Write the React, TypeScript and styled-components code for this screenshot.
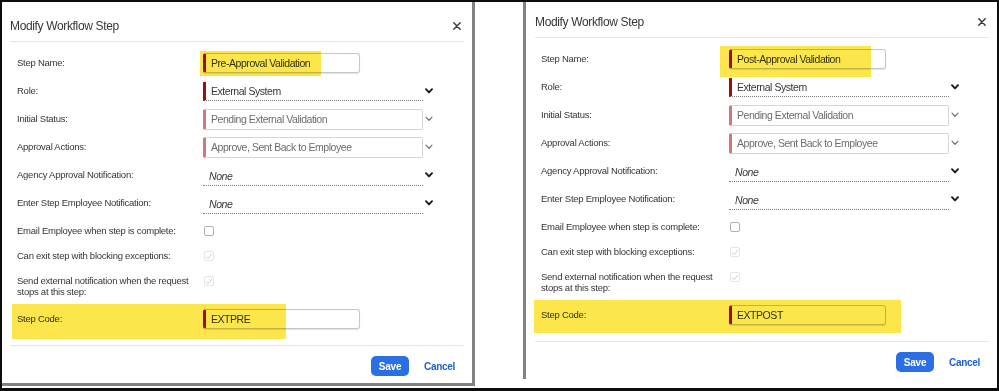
import React from "react";
import styled, { createGlobalStyle, css } from "styled-components";

const FONT = `"Liberation Sans", Arial, sans-serif`;

const GlobalStyle = createGlobalStyle`
  html, body { margin: 0; padding: 0; background: #fff; }
  body { font-family: ${FONT}; }
  * { box-sizing: border-box; }
`;

const Frame = styled.div`
  width: 999px;
  height: 391px;
  border: 2px solid #0d0d0d;
  border-bottom-width: 3px;
  display: flex;
  align-items: flex-start;
  background: #fff;
  overflow: hidden;
`;

const Gap = styled.div`
  width: 48px;
  flex: none;
`;

const Dialog = styled.div<{ $side: "left" | "right" }>`
  background: #fff;
  display: flex;
  flex-direction: column;
  flex: none;
  ${(p) =>
    p.$side === "left"
      ? css`
          width: 473px;
          height: 384px;
          border-right: 3px solid #7e8185;
          border-bottom: 3px solid #7e8185;
        `
      : css`
          flex: 1;
          height: 377px;
          border-left: 3px solid #7e8185;
        `}
`;

const Header = styled.div<{ $top: number; $ml: number }>`
  margin: 0 8px 0 ${(p) => p.$ml}px;
  padding: ${(p) => p.$top}px 3px 7px 0;
  border-bottom: 1px solid #e4e6e8;
  display: flex;
  justify-content: space-between;
  align-items: center;
`;

const Title = styled.div`
  font-size: 12px;
  letter-spacing: -0.35px;
  line-height: 16px;
  color: #32363a;
`;

const CloseBtn = styled.div`
  width: 8px;
  height: 8px;
  display: flex;
  cursor: pointer;
`;

const Body = styled.div`
  padding: 7px 0 0 15px;
  display: flex;
  flex-direction: column;
`;

const Row = styled.div<{ $h: number; $lw: number; $top?: boolean }>`
  position: relative;
  display: grid;
  grid-template-columns: ${(p) => p.$lw}px auto;
  height: ${(p) => p.$h}px;
  align-items: ${(p) => (p.$top ? "start" : "center")};
  ${(p) => p.$top && css`padding-top: 9px;`}
`;

const Label = styled.div`
  font-size: 9.5px;
  letter-spacing: -0.25px;
  line-height: 10.5px;
  color: #32363a;
  white-space: nowrap;
`;

const FieldCell = styled.div`
  display: flex;
  align-items: center;
`;

const TextBox = styled.div`
  width: 157px;
  height: 20px;
  border: 1px solid #c3c7cb;
  border-left: 3px solid #a10d0d;
  border-radius: 3px;
  box-shadow: 0 1px 1px rgba(0, 0, 0, 0.12);
  padding-left: 5px;
  display: flex;
  align-items: center;
  font-size: 10.5px;
  letter-spacing: -0.45px;
  color: #32363a;
`;

type Kind = "required" | "readonly" | "plain";

const SelectBox = styled.div<{ $kind: Kind }>`
  width: 220px;
  display: flex;
  align-items: center;
  font-size: 10.5px;
  letter-spacing: -0.45px;
  ${(p) =>
    p.$kind === "required" &&
    css`
      height: 19px;
      border-left: 3px solid #a10d0d;
      border-bottom: 1px dotted #767b80;
      padding-left: 5px;
      color: #32363a;
    `}
  ${(p) =>
    p.$kind === "readonly" &&
    css`
      height: 21px;
      border: 1px solid #d3d6d9;
      border-left: 3px solid #d27777;
      border-radius: 2px;
      padding-left: 5px;
      color: #6a6d70;
    `}
  ${(p) =>
    p.$kind === "plain" &&
    css`
      height: 21px;
      border-bottom: 1px dotted #767b80;
      padding: 2px 0 0 6px;
      color: #32363a;
      font-style: italic;
    `}
`;

const ChevronWrap = styled.div`
  margin-left: 2px;
  display: flex;
`;

const CheckBox = styled.div<{ $disabled?: boolean }>`
  width: 10px;
  height: 10px;
  margin-left: 1px;
  border: 1px solid ${(p) => (p.$disabled ? "#e3e5e7" : "#aeb2b6")};
  border-radius: 2px;
  display: flex;
  align-items: center;
  justify-content: center;
`;

const Highlight = styled.div`
  position: absolute;
  background: #fde64b;
  mix-blend-mode: multiply;
  pointer-events: none;
`;

const Footer = styled.div<{ $ml: number }>`
  margin: 12px 8px 0 ${(p) => p.$ml}px;
  border-top: 1px solid #e4e6e8;
  padding: 10px 9px 0 0;
  display: flex;
  justify-content: flex-end;
  align-items: center;
  gap: 15px;
`;

const SaveBtn = styled.button`
  width: 38px;
  height: 20px;
  border: none;
  border-radius: 5px;
  background: #2a6fe3;
  color: #fff;
  font-family: ${FONT};
  font-size: 10px;
  letter-spacing: -0.2px;
  font-weight: 700;
  padding: 0;
`;

const CancelBtn = styled.button`
  border: none;
  background: none;
  padding: 0;
  color: #1d62d4;
  font-family: ${FONT};
  font-size: 10px;
  letter-spacing: -0.3px;
  font-weight: 700;
`;

const Chevron = ({ bold }: { bold?: boolean }) => (
  <svg width="8" height="6" viewBox="0 0 8 6">
    <path
      d="M1 1.2 L4 4.4 L7 1.2"
      fill="none"
      stroke={bold ? "#1a1a1a" : "#6a6d70"}
      strokeWidth={bold ? 1.9 : 1.2}
      strokeLinecap="round"
      strokeLinejoin="round"
    />
  </svg>
);

const CloseIcon = () => (
  <svg width="8" height="8" viewBox="0 0 8 8">
    <path d="M0.8 0.8 L7.2 7.2 M7.2 0.8 L0.8 7.2" stroke="#32363a" strokeWidth="1.4" strokeLinecap="round" />
  </svg>
);

const Check = () => (
  <svg width="8" height="7" viewBox="0 0 8 7">
    <path d="M1 3.6 L3 5.6 L7 1" fill="none" stroke="#c7c9cc" strokeWidth="1" />
  </svg>
);

type Box = { l: number; t: number; w: number; h: number };

type DialogProps = {
  side: "left" | "right";
  stepName: string;
  stepCode: string;
  nameHl: Box;
  codeHl: Box;
};

const HL = ({ b }: { b: Box }) => (
  <Highlight style={{ left: b.l, top: b.t, width: b.w, height: b.h }} />
);

const WorkflowDialog = ({ side, stepName, stepCode, nameHl, codeHl }: DialogProps) => {
  const lw = side === "left" ? 186 : 188;
  const ml = side === "left" ? 8 : 9;
  return (
    <Dialog $side={side}>
      <Header $top={side === "left" ? 16 : 12} $ml={ml}>
        <Title>Modify Workflow Step</Title>
        <CloseBtn>
          <CloseIcon />
        </CloseBtn>
      </Header>
      <Body>
        <Row $h={28} $lw={lw}>
          <Label>Step Name:</Label>
          <FieldCell>
            <TextBox>{stepName}</TextBox>
          </FieldCell>
          <HL b={nameHl} />
        </Row>
        <Row $h={28} $lw={lw}>
          <Label>Role:</Label>
          <FieldCell>
            <SelectBox $kind="required">External System</SelectBox>
            <ChevronWrap>
              <Chevron bold />
            </ChevronWrap>
          </FieldCell>
        </Row>
        <Row $h={28} $lw={lw}>
          <Label>Initial Status:</Label>
          <FieldCell>
            <SelectBox $kind="readonly">Pending External Validation</SelectBox>
            <ChevronWrap>
              <Chevron />
            </ChevronWrap>
          </FieldCell>
        </Row>
        <Row $h={28} $lw={lw}>
          <Label>Approval Actions:</Label>
          <FieldCell>
            <SelectBox $kind="readonly">Approve, Sent Back to Employee</SelectBox>
            <ChevronWrap>
              <Chevron />
            </ChevronWrap>
          </FieldCell>
        </Row>
        <Row $h={28} $lw={lw}>
          <Label>Agency Approval Notification:</Label>
          <FieldCell>
            <SelectBox $kind="plain">None</SelectBox>
            <ChevronWrap>
              <Chevron bold />
            </ChevronWrap>
          </FieldCell>
        </Row>
        <Row $h={28} $lw={lw}>
          <Label>Enter Step Employee Notification:</Label>
          <FieldCell>
            <SelectBox $kind="plain">None</SelectBox>
            <ChevronWrap>
              <Chevron bold />
            </ChevronWrap>
          </FieldCell>
        </Row>
        <Row $h={28} $lw={lw}>
          <Label>Email Employee when step is complete:</Label>
          <FieldCell>
            <CheckBox />
          </FieldCell>
        </Row>
        <Row $h={22} $lw={lw}>
          <Label>Can exit step with blocking exceptions:</Label>
          <FieldCell>
            <CheckBox $disabled>
              <Check />
            </CheckBox>
          </FieldCell>
        </Row>
        <Row $h={38} $lw={lw} $top>
          <Label>
            Send external notification when the request
            <br />
            stops at this step:
          </Label>
          <FieldCell>
            <CheckBox $disabled>
              <Check />
            </CheckBox>
          </FieldCell>
        </Row>
        <Row $h={28} $lw={lw}>
          <Label>Step Code:</Label>
          <FieldCell>
            <TextBox>{stepCode}</TextBox>
          </FieldCell>
          <HL b={codeHl} />
        </Row>
      </Body>
      <Footer $ml={ml}>
        <SaveBtn>Save</SaveBtn>
        <CancelBtn>Cancel</CancelBtn>
      </Footer>
    </Dialog>
  );
};

export default function App() {
  return (
    <>
      <GlobalStyle />
      <Frame>
        <WorkflowDialog
          side="left"
          stepName="Pre-Approval Validation"
          stepCode="EXTPRE"
          nameHl={{ l: 183, t: 2, w: 121, h: 25 }}
          codeHl={{ l: -5, t: -1, w: 274, h: 35 }}
        />
        <Gap />
        <WorkflowDialog
          side="right"
          stepName="Post-Approval Validation"
          stepCode="EXTPOST"
          nameHl={{ l: 179, t: 1, w: 151, h: 31 }}
          codeHl={{ l: -7, t: -1, w: 367, h: 33 }}
        />
      </Frame>
    </>
  );
}
